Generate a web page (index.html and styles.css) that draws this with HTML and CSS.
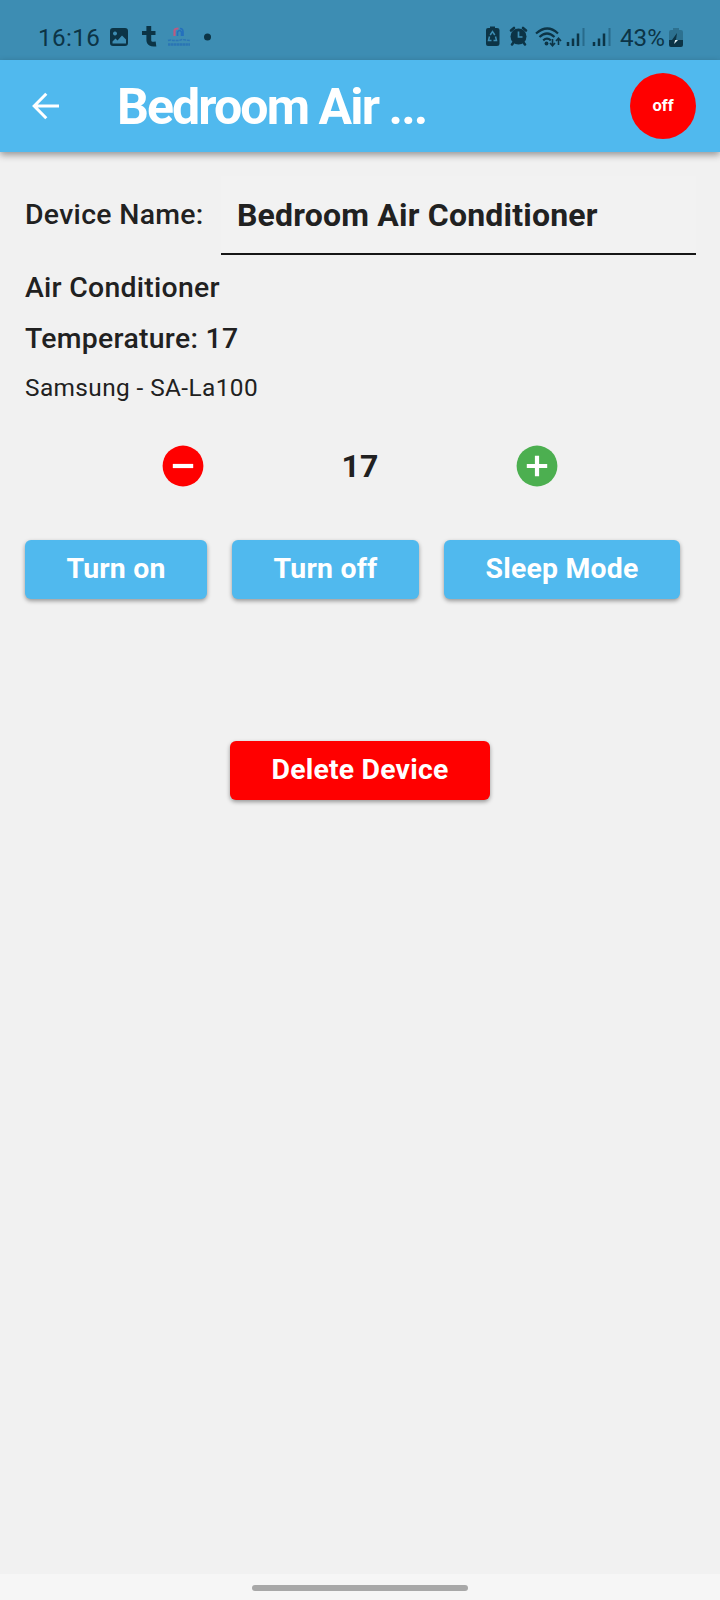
FILE: index.html
```html
<!DOCTYPE html>
<html lang="en">
<head>
<meta charset="utf-8">
<title>Bedroom Air Conditioner</title>
<link rel="stylesheet" href="styles.css">
</head>
<body>
<div class="screen">
  <div class="status">
    <span class="clock">16:16</span>
    <svg class="status-left" width="110" height="30" viewBox="0 0 110 30">
      <path fill="#0c3446" fill-rule="evenodd" d="M4 5h12a3 3 0 0 1 3 3v12a3 3 0 0 1-3 3H4a3 3 0 0 1-3-3V8a3 3 0 0 1 3-3zM6 8.500a2 2 0 1 0 .01 0zM3.500 20.500h13.500v-4l-4-4-4.500 5-2-2-3 3z"/>
      <path fill="none" stroke="#0c3446" stroke-width="4.800" stroke-linejoin="round" d="M39.800 3v14q0 5 7.200 4"/>
      <path fill="none" stroke="#0c3446" stroke-width="4" d="M33 10h13.500"/>
      <path fill="none" stroke="#dc4d75" stroke-opacity=".8" stroke-width="2.200" d="M65.500 13V7.500q0-2 4-2"/>
      <path fill="none" stroke="#2470bd" stroke-width="1.600" d="M68.500 13V9q2-3 4 0v4M71 5.500q3 0 3 3V13"/>
      <path fill="none" stroke="#2a75b5" stroke-width="1.400" stroke-dasharray="3 .8" d="M59 17.500q3-1 5 0h6l3-1 8 1"/>
      <path fill="none" stroke="#2a75b5" stroke-width="2.600" stroke-dasharray="2.500 .4" d="M59 21.500h22"/>
      <circle cx="98.500" cy="14" r="3.500" fill="#0c3446"/>
    </svg>
    <svg class="status-right" width="130" height="30" viewBox="0 0 130 30">
      <g fill="#0c3446">
        <path d="M5 3.500h5V5h2q2.500 0 2.500 2v14q0 2-2.500 2H3q-2 0-2-2V7q0-2 2-2h2z"/>
        <path fill="none" stroke="#3d8db3" stroke-width="1.500" d="M5.200 12l2.300-3.500 2.300 3.500M10.500 13.500l1 4h-3M6.500 17.500h-3l1-4"/>
        <circle cx="33.500" cy="13.500" r="8"/>
        <path fill="none" stroke="#0c3446" stroke-width="2.600" stroke-linecap="round" d="M26 7.500l3-2.500M38 5l3 2.500M28.500 19.500l-1.500 2M38.500 19.500l1.500 2"/>
        <path fill="none" stroke="#3d8db3" stroke-width="1.700" d="M33.500 8.500v5.500h4"/>
      </g>
      <g fill="none" stroke="#0c3446" stroke-width="2.200">
        <path d="M51 10.500q11.500-10 22 0M54.500 14q7.500-7 15 0M58.200 17.300q3.800-3.300 7.600 0"/>
        <path stroke-width="1.600" d="M67.500 16v6.500m-2.500-2.500l2.500 2.700 2.500-2.700M73.500 22v-6.500M71 18l2.500-2.700 2.500 2.700"/>
        <path stroke-width="2.500" d="M83 19v4M88 15.500V23M93 10.500V23M109 19v4M114 15.500V23M119 10.500V23"/>
        <path stroke-width="2" stroke="#286b8b" d="M98.500 5v18M124.500 5v18"/>
      </g>
      <circle cx="61.500" cy="20.500" r="1.900" fill="#0c3446"/>
    </svg>
    <span class="percent">43%</span>
    <svg class="battery" width="14" height="20" viewBox="0 0 14 20">
      <path fill="#2d7190" d="M4 0h6v2h2q2 0 2 2v9H0V4q0-2 2-2h2z"/>
      <path fill="#0c3446" d="M0 12h14v5q0 2-2 2H2q-2 0-2-2zM8 5l-5 7h4z"/>
      <path fill="#e6f3f8" d="M5 16l1.200-4H9z"/>
    </svg>
  </div>
  <header class="appbar">
    <svg class="back" width="28" height="28" viewBox="0 0 28 28"><path fill="none" stroke="#fff" stroke-width="3" d="M27 14H3M14.300 1.800L2.200 14l12.100 12.200"/></svg>
    <h1 class="title">Bedroom Air ...</h1>
    <div class="state">off</div>
  </header>
  <main class="content">
    <div class="name-row">
      <span class="label">Device Name:</span>
      <div class="field"><span class="field-text">Bedroom Air Conditioner</span></div>
    </div>
    <div class="type">Air Conditioner</div>
    <div class="temp">Temperature: 17</div>
    <div class="model">Samsung - SA-La100</div>
    <div class="stepper">
      <svg width="42" height="42" viewBox="0 0 42 42"><circle cx="21" cy="21" r="20.400" fill="#f00"/><path stroke="#fff" stroke-width="4.200" d="M10.800 21h20.400"/></svg>
      <span class="value">17</span>
      <svg width="42" height="42" viewBox="0 0 42 42"><circle cx="21" cy="21" r="20.400" fill="#4caf50"/><path stroke="#fff" stroke-width="4.200" d="M10.800 21h20.400M21 10.800v20.400"/></svg>
    </div>
    <div class="actions">
      <div class="btn on"><span>Turn on</span></div>
      <div class="btn off"><span>Turn off</span></div>
      <div class="btn sleep"><span>Sleep Mode</span></div>
    </div>
    <div class="btn delete"><span>Delete Device</span></div>
  </main>
  <div class="nav"><div class="pill"></div></div>
</div>
</body>
</html>
```
FILE: styles.css
```css
* { box-sizing: border-box; }
body { margin: 0; font-family: Roboto, sans-serif; color: #212121; }
.screen { width: 720px; height: 1600px; display: flex; flex-direction: column; background: #f1f1f1; white-space: nowrap; }
.status { height: 60px; flex: none; display: flex; align-items: center; padding: 15px 0 0 38px; background: #3d8db3; color: #0c3446; font-size: 24.2px; line-height: 44px; }
.clock { width: 71px; letter-spacing: 0.4px; }
.status-left { flex: none; }
.status-right { flex: none; margin-left: 266px; }
.percent { margin-left: 5px; width: 49px; }
.battery { margin-left: 0; }
.appbar { height: 92px; flex: none; display: flex; align-items: center; padding: 0 24px 0 32px; background: #50b9ee; color: #fff; box-shadow: 0 3px 7px rgba(0,0,0,.38); z-index: 1; }
.title { margin: 1px 0 0 57px; font-size: 50px; line-height: 60px; font-weight: 700; letter-spacing: -1.9px; }
.state { margin-left: auto; width: 66px; height: 66px; border-radius: 50%; background: #f00; font-size: 16.5px; font-weight: 700; line-height: 65px; text-align: center; }
.content { flex: 1; padding: 24px 24px 0 25px; }
.name-row { display: flex; height: 79px; margin-bottom: 7px; }
.label { width: 196px; font-size: 28.4px; font-weight: 500; line-height: 77px; letter-spacing: 0.32px; }
.field { flex: 1; padding-left: 16px; background: #f2f2f2; border-bottom: 2px solid #161616; }
.field-text { font-size: 32px; font-weight: 700; line-height: 78px; letter-spacing: 0.2px; }
.type { font-size: 28.4px; font-weight: 500; line-height: 51px; letter-spacing: 0.28px; }
.temp { font-size: 28.4px; font-weight: 500; line-height: 51px; letter-spacing: 0.3px; }
.model { font-size: 24.4px; line-height: 47px; letter-spacing: 0.4px; }
.stepper { height: 110px; margin-left: 137px; width: 396px; display: flex; align-items: center; justify-content: space-between; }
.value { font-size: 32px; font-weight: 700; letter-spacing: 0.2px; }
.actions { display: flex; gap: 25px; margin-top: 19px; }
.btn { height: 59px; border-radius: 6px; background: #50b9ee; color: #fff; font-size: 28.4px; font-weight: 700; line-height: 57px; letter-spacing: 0.2px; text-align: center; box-shadow: 0 2px 4px rgba(0,0,0,.38); }
.on { width: 182px; }
.off { width: 187px; }
.sleep { width: 236px; }
.delete { width: 260px; margin: 142px 0 0 205px; background: #f00; }
.nav { height: 26px; flex: none; padding-top: 11px; background: #f6f6f6; }
.pill { width: 216px; height: 6px; margin: 0 auto; border-radius: 3px; background: #a8a8a8; }
```
